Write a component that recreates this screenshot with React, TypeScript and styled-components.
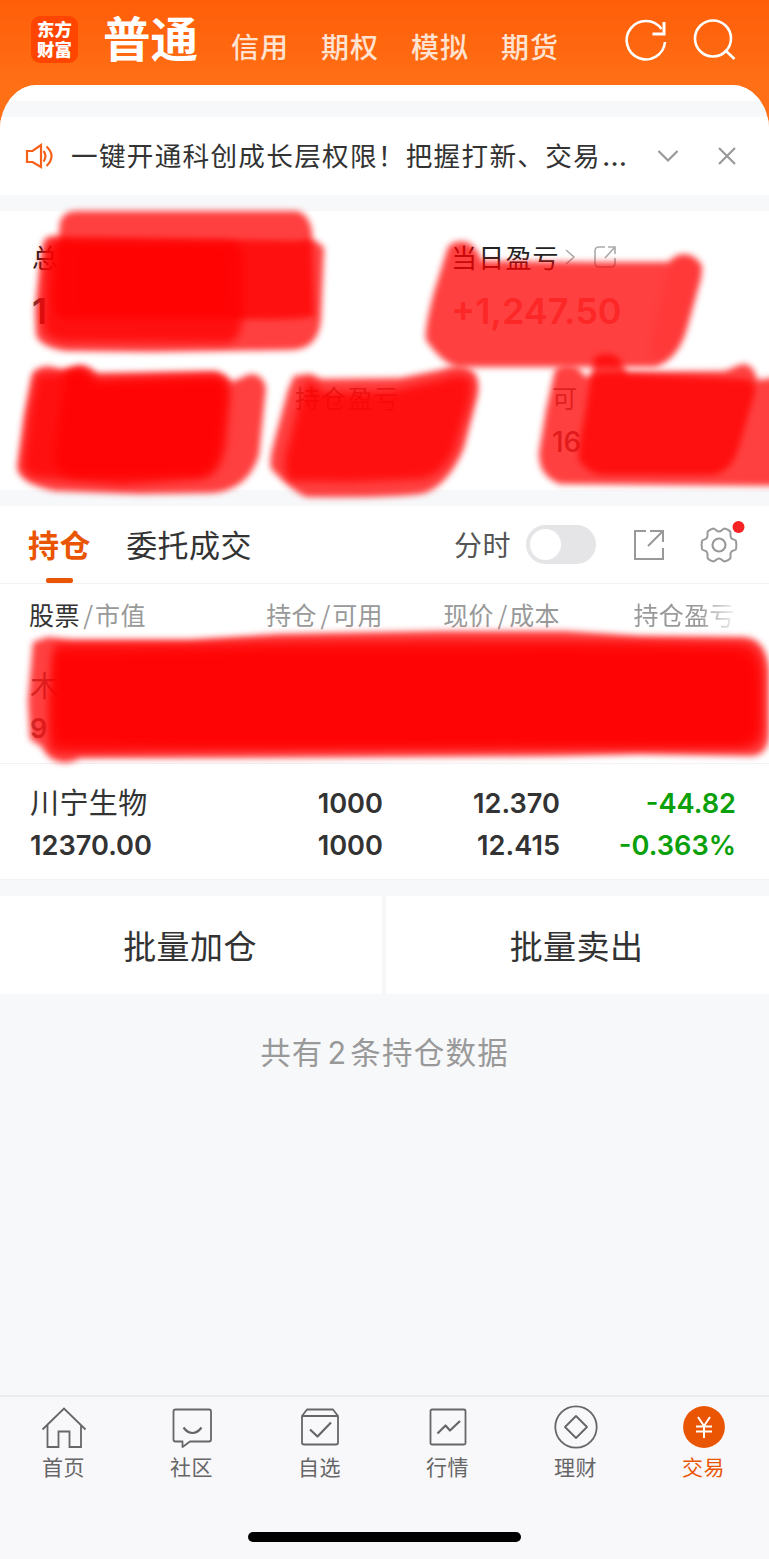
import React from "react";
import styled, { createGlobalStyle } from "styled-components";

const GlobalStyle = createGlobalStyle`
  *, *::before, *::after { box-sizing: border-box; }
  body {
    margin: 0;
    background: #f7f8fa;
    font-family: Inter, "Noto Sans CJK SC", sans-serif;
    color: #333;
  }
`;

const cjk = `"Noto Sans CJK SC", sans-serif`;

const Screen = styled.div`
  position: relative;
  display: flex;
  flex-direction: column;
  width: 769px;
  height: 1559px;
  overflow: hidden;
  background: #f7f8fa;
`;

/* ---------- header ---------- */

const Header = styled.header`
  display: flex;
  align-items: flex-start;
  flex: none;
  height: 130px;
  margin-bottom: -45px;
  padding-left: 31px;
  background: linear-gradient(#ff5e09, #ff6f15 85px);
`;

const Logo = styled.div`
  display: flex;
  flex-direction: column;
  align-items: center;
  flex: none;
  width: 47px;
  height: 47px;
  margin-top: 16px;
  padding-top: 3px;
  border-radius: 9px;
  background: #ff4500;
  color: #fff;
  font: 900 17.4px/20px ${cjk};
`;

const LogoLine = styled.span`
  display: block;
  height: 20px;
`;

const AccountTabs = styled.nav`
  display: flex;
  margin-left: 25px;
`;

const MainAccount = styled.span`
  width: 97px;
  margin-right: 31px;
  color: #fff;
  font: 700 47.5px/73px ${cjk};
`;

const Account = styled.span`
  width: 90px;
  color: #ffe2d0;
  font: 500 28px/93px ${cjk};
  letter-spacing: 1px;
`;

const HeaderIcons = styled.svg`
  flex: none;
  width: 116px;
  height: 50px;
  margin: 16px 0 0 32px;
`;

/* ---------- sheet ---------- */

const Sheet = styled.main`
  position: relative;
  flex: none;
  overflow: hidden;
  border-radius: 37px 37px 0 0 / 44px 44px 0 0;
  background: #f7f8fa;
`;

const Lip = styled.div`
  height: 16px;
  background: #fff;
`;

const Notice = styled.section`
  display: flex;
  align-items: center;
  height: 78px;
  margin-top: 16px;
  padding: 0 31px 0 25px;
  background: #fff;
`;

const NoticeText = styled.p`
  flex: none;
  width: 586px;
  margin: -2px 0 0 17px;
  font: 400 26.6px/40px ${cjk};
  letter-spacing: 1.3px;
  white-space: nowrap;
`;

const Ellipsis = styled.span`
  margin-left: 1px;
  font-family: Inter, sans-serif;
  font-size: 29px;
  letter-spacing: 0;
  line-height: 1;
`;

const Chevron = styled.svg`
  flex: none;
  width: 22px;
  height: 14px;
  margin: 0 38px 0 0;
`;

const Close = styled.svg`
  flex: none;
  width: 20px;
  height: 20px;
`;

/* ---------- assets ---------- */

const Assets = styled.section`
  height: 279px;
  margin-top: 16px;
  padding: 27px 0 0 32px;
  background: #fff;
`;

const AssetRow = styled.div<{ $columns: string }>`
  display: grid;
  grid-template-columns: ${(p) => p.$columns};
  height: 140px;
`;

const AssetLabel = styled.div<{ $small?: boolean }>`
  display: flex;
  align-items: center;
  height: 38px;
  font: 400 ${(p) => (p.$small ? 25 : 26)}px/38px ${cjk};
  letter-spacing: 1.2px;
  color: ${(p) => (p.$small ? "#8a8080" : "#222")};
`;

const AssetValue = styled.div<{ $gain?: boolean; $small?: boolean }>`
  margin-top: ${(p) => (p.$small ? 6 : 15)}px;
  font-size: ${(p) => (p.$small ? 28 : 36)}px;
  font-weight: ${(p) => (p.$small ? 500 : 600)};
  line-height: 40px;
  color: ${(p) => (p.$gain ? "#f5a0a0" : p.$small ? "#857070" : "#444")};
`;

const MiniChevron = styled.svg`
  width: 12px;
  height: 18px;
  margin-left: 4px;
`;

const MiniShare = styled.svg`
  width: 24px;
  height: 24px;
  margin-left: 17px;
`;

/* ---------- positions ---------- */

const Positions = styled.section`
  margin-top: 16px;
  background: #fff;
`;

const Toolbar = styled.div`
  display: flex;
  align-items: center;
  height: 78px;
  padding-left: 29px;
  border-bottom: 1px solid #f2f2f4;
`;

const Tab = styled.div<{ $active?: boolean }>`
  display: flex;
  flex-direction: column;
  align-items: center;
  width: ${(p) => (p.$active ? 61 : 126)}px;
  height: 77px;
  margin-right: ${(p) => (p.$active ? 36 : 202)}px;
  font: ${(p) => (p.$active ? 700 : 400)} 31px/75px ${cjk};
  letter-spacing: 0.4px;
  white-space: nowrap;
  color: ${(p) => (p.$active ? "#ea5504" : "#333")};

  &::after {
    content: "";
    display: ${(p) => (p.$active ? "block" : "none")};
    flex: none;
    width: 27px;
    height: 5px;
    margin-top: -3px;
    border-radius: 2px;
    background: #ea5504;
  }
`;

const ToggleLabel = styled.span`
  width: 72px;
  margin-top: -2px;
  font: 400 28px/40px ${cjk};
  letter-spacing: 0.6px;
  color: #555;
`;

const Toggle = styled.span`
  flex: none;
  width: 70px;
  height: 39px;
  padding: 4px;
  border-radius: 20px;
  background: #e5e5e7;

  &::after {
    content: "";
    display: block;
    width: 31px;
    height: 31px;
    border-radius: 50%;
    background: #fff;
  }
`;

const ToolIcons = styled.svg`
  flex: none;
  width: 120px;
  height: 50px;
  margin-left: 34px;
`;

const columns = "170px 183px 177px 176px";

const HeadRow = styled.div`
  display: grid;
  grid-template-columns: ${columns};
  height: 63px;
  padding-left: 30px;
  font: 400 25px/60px ${cjk};
  letter-spacing: 0.4px;
  color: #999;
`;

const HeadCell = styled.span<{ $fade?: boolean }>`
  justify-self: end;
  margin-right: ${(p) => (p.$fade ? 1 : 0)}px;
  white-space: nowrap;
  mask-image: ${(p) => (p.$fade ? "linear-gradient(90deg, #000 65%, rgba(0, 0, 0, 0.15))" : "none")};

  &:first-child {
    justify-self: start;
    margin-left: -1px;
  }
`;

const Strong = styled.span`
  color: #333;
`;

const Slash = styled.span`
  margin: 0 1.5px 0 3.5px;
`;

const Row = styled.div<{ $height: number }>`
  display: grid;
  grid-template-columns: ${columns};
  grid-template-rows: 42px 42px;
  align-content: start;
  height: ${(p) => p.$height}px;
  padding: 18px 0 0 30px;
  border-bottom: 1px solid #f2f2f4;
`;

const StockName = styled.span<{ $dim?: boolean }>`
  margin-top: -2px;
  font: 400 29px/42px ${cjk};
  letter-spacing: 0.4px;
  color: ${(p) => (p.$dim ? "#777" : "#333")};
`;

const Num = styled.span<{ $loss?: boolean; $left?: boolean; $dim?: boolean }>`
  font-size: 27.2px;
  font-weight: 600;
  line-height: 43px;
  text-align: ${(p) => (p.$left ? "left" : "right")};
  color: ${(p) => (p.$loss ? "#0aa00a" : p.$dim ? "#777" : "#333")};
`;

const Actions = styled.div`
  display: grid;
  grid-template-columns: 382px 383px;
  gap: 4px;
  height: 98px;
  margin-top: 16px;
`;

const Action = styled.button`
  padding: 0 2px 0 0;
  border: 0;
  background: #fff;
  color: #333;
  font: 400 33px/98px ${cjk};
  letter-spacing: 0.4px;
`;

const Summary = styled.p`
  flex: 1;
  margin: 32px 0 0;
  font: 400 30.5px/50px ${cjk};
  letter-spacing: 1.2px;
  text-align: center;
  color: #999;
`;

const SummaryCount = styled.span`
  margin: 0 3px 0 4px;
  font-family: Inter, sans-serif;
`;

/* ---------- bottom bar ---------- */

const BottomBar = styled.nav`
  display: grid;
  grid-template-columns: repeat(6, 128px);
  grid-template-rows: 78px 1fr;
  flex: none;
  height: 164px;
  padding-top: 7px;
  border-top: 2px solid #ebecee;
  background: #f8f8fb;
`;

const BottomItem = styled.div<{ $active?: boolean }>`
  display: flex;
  flex-direction: column;
  align-items: center;
  padding-right: 1px;
  font: 400 21px/32px ${cjk};
  letter-spacing: 0.5px;
  color: ${(p) => (p.$active ? "#ea5504" : "#666")};

  svg {
    width: 46px;
    height: 46px;
    margin-left: 1px;
    fill: none;
    stroke: currentColor;
    stroke-width: 1.8;
    stroke-linejoin: round;
  }
`;

const HomeIndicator = styled.div`
  justify-self: center;
  align-self: start;
  grid-column: 1 / -1;
  width: 273px;
  height: 10px;
  margin-top: 50px;
  border-radius: 5px;
  background: #000;
`;

/* ---------- marker strokes lying over the figures ---------- */

const Marker = styled.svg`
  position: absolute;
  left: 0;
  top: 0;
  width: 769px;
  height: 1559px;
  pointer-events: none;
`;

const strokes: { d: string; o?: number; soft?: boolean }[] = [
  { d: "M60 222Q64 211 76 211H296Q309 213 312 232L314 316Q300 320 240 319H62Q52 315 54 290Z" },
  { d: "M44 240Q50 234 60 237L230 240L300 241Q314 236 324 248L321 320Q318 350 290 350L220 351L150 352L66 351Q40 347 36 335L35 310L40 262Z" },
  { d: "M48 244Q56 238 70 242H232Q243 245 243 258V310Q243 342 226 343L70 342Q44 342 43 325L45 262Z", soft: true },
  { d: "M80 252H222V310H82Z", o: 0.6, soft: true },
  { d: "M32 374Q36 367 48 366L64 370L80 365Q90 366 97 373L214 371Q224 372 232 382L250 374Q263 374 266 388L259 455Q248 490 212 493L140 494L55 491Q20 484 17 468L24 415Z" },
  { d: "M37 375L60 373L80 369L98 379L214 375Q231 378 230 395L226 445Q220 478 200 479L120 485L32 477Q21 469 23 461L30 410Z", soft: true },
  { d: "M66 371L82 369L98 384L214 379Q228 382 225 398L219 445Q214 474 196 475L70 477Q54 470 54 455L60 410Z", soft: true },
  { d: "M294 376L310 374L322 379L400 378L440 370Q462 362 474 372Q480 380 478 394L464 448Q449 484 425 493Q405 498 306 497Q294 492 272 470Q268 464 274 442L288 390Z" },
  { d: "M308 379L324 392L390 391L440 380Q464 370 472 382L470 400L454 450Q442 476 420 479L350 482L290 481Q280 470 289 442L300 400Z", soft: true },
  { d: "M448 247Q454 240 467 242Q477 247 482 261L592 262L668 262L676 256Q692 250 702 266L701 278L687 328Q678 360 655 367H458Q443 364 426 340Q424 330 434 292Z" },
  { d: "M676 258Q692 252 701 268L687 325Q675 358 655 360Q648 354 655 325L668 272Z", o: 0.12, soft: true },
  { d: "M555 370Q560 364 577 367L586 377L600 372L725 371L742 364Q754 364 757 380L780 377V486L660 485L560 484Q538 476 539 452L546 410Z" },
  { d: "M594 358Q602 352 614 355Q623 360 627 374L740 379Q756 378 755 392L738 450Q730 474 710 475H605Q592 476 580 462Q576 456 584 420Z" },
  { d: "M33 642L48 637L72 640H190L280 634L440 631H565L640 636L742 637Q766 637 769 670L769 735Q768 756 750 756L640 754L560 756L240 758L80 758Q70 764 60 762Q48 760 42 747L30 739L28 700Z" },
  { d: "M54 644L72 643H190L280 641L440 640H565L740 643Q762 644 763 675V725Q763 749 744 749H560L250 750L70 753Q48 755 49 742L48 700L52 670Z", soft: true },
  { d: "M54 654L190 652L280 650L565 649L735 651Q755 654 757 677V725Q755 743 735 744L250 747L66 744Q52 742 54 720Z", soft: true },
];

function MarkerLayer() {
  return (
    <Marker viewBox="0 0 769 1559">
      <defs>
        <filter id="edge" x="-10%" y="-10%" width="120%" height="120%">
          <feGaussianBlur stdDeviation="3" />
        </filter>
        <filter id="soft" x="-15%" y="-15%" width="130%" height="130%">
          <feGaussianBlur stdDeviation="4.2" />
        </filter>
      </defs>
      {strokes.map((s, i) => (
        <path
          key={i}
          d={s.d}
          fill="#ff0700"
          fillOpacity={s.o ?? 0.75}
          filter={s.soft ? "url(#soft)" : "url(#edge)"}
        />
      ))}
    </Marker>
  );
}

const bottomItems = [
  {
    label: "首页",
    icon: <path d="M1.500 25.500 23 4.500 44.500 25.500M6.500 21V43H17.500V27.500H28.500V43H40V21" strokeLinejoin="miter" />,
  },
  {
    label: "社区",
    icon: (
      <>
        <path d="M6.500 5.500H40Q42 5.500 42 7.500V35.500Q42 37.500 40 37.500H21L13.500 43V37.500H6.500Q4.500 37.500 4.500 35.500V7.500Q4.500 5.500 6.500 5.500Z" />
        <path d="M14.500 23.500Q18.500 29 23.500 29T32.500 23.500" strokeWidth="2.2" />
      </>
    ),
  },
  {
    label: "自选",
    icon: (
      <>
        <path d="M5 12 10 5.500H36L41 12V38.500Q41 40.500 39 40.500H7Q5 40.500 5 38.500ZM5 12H41" />
        <path d="M13 25.500 20.500 32.500 34 18.500" strokeWidth="2.2" />
      </>
    ),
  },
  {
    label: "行情",
    icon: (
      <>
        <rect x="5.500" y="5.500" width="35" height="35" rx="1.500" />
        <path d="M12.500 29.500 20.500 21.500 25 26.500 35 17" strokeWidth="2.2" />
      </>
    ),
  },
  {
    label: "理财",
    icon: (
      <>
        <circle cx="23" cy="23" r="20.700" />
        <path d="M23 12 34 23 23 34 12 23Z" />
      </>
    ),
  },
  {
    label: "交易",
    active: true,
    icon: (
      <>
        <circle cx="23" cy="23" r="20.900" fill="currentColor" stroke="none" />
        <path d="M17 13 23 22 29 13M15 22.500H31M15 27.500H31M23 22V34" stroke="#fff" strokeWidth="2" />
      </>
    ),
  },
];

export default function App() {
  return (
    <>
      <GlobalStyle />
      <Screen>
        <Header>
          <Logo>
            <LogoLine>东方</LogoLine>
            <LogoLine>财富</LogoLine>
          </Logo>
          <AccountTabs>
            <MainAccount>普通</MainAccount>
            <Account>信用</Account>
            <Account>期权</Account>
            <Account>模拟</Account>
            <Account>期货</Account>
          </AccountTabs>
          <HeaderIcons viewBox="0 0 116 50" fill="none" stroke="#fff" strokeWidth="2.600">
            <path d="M38.500 13A19.200 19.200 0 1 0 42 26" />
            <path d="M41 6V18H29.500" strokeWidth="3" />
            <circle cx="90" cy="22.500" r="18" />
            <path d="M102 34 111.500 43" />
          </HeaderIcons>
        </Header>

        <Sheet>
          <Lip />
          <Notice>
            <svg width="29" height="26" viewBox="0 0 29 26" fill="none" stroke="#f7601a" strokeWidth="2.200">
              <path d="M2 8H7.500L16 2V24L7.500 19H2Z" />
              <path d="M18.500 8Q22.500 13 18.500 18.500M21.500 3.500Q31.500 13 21.500 23" />
            </svg>
            <NoticeText>
              一键开通科创成长层权限！把握打新、交易<Ellipsis>…</Ellipsis>
            </NoticeText>
            <Chevron viewBox="0 0 22 14" fill="none" stroke="#999" strokeWidth="2.200">
              <path d="M1.500 2 11 11.500 20.500 2" />
            </Chevron>
            <Close viewBox="0 0 20 20" fill="none" stroke="#999" strokeWidth="2.200">
              <path d="M2 2 18 18M18 2 2 18" />
            </Close>
          </Notice>

          <Assets>
            <AssetRow $columns="419px 1fr">
              <div>
                <AssetLabel>总</AssetLabel>
                <AssetValue>1</AssetValue>
              </div>
              <div>
                <AssetLabel>
                  当日盈亏
                  <MiniChevron viewBox="0 0 12 18" fill="none" stroke="#aaa" strokeWidth="1.500">
                    <path d="M2 2 10 9 2 16" />
                  </MiniChevron>
                  <MiniShare viewBox="0 0 24 24" fill="none" stroke="#aaa" strokeWidth="1.600">
                    <path d="M12 2H6Q2 2 2 6V18Q2 22 6 22H18Q22 22 22 18V13M12 13 22 2M15 2H22V9" />
                  </MiniShare>
                </AssetLabel>
                <AssetValue $gain>+1,247.50</AssetValue>
              </div>
            </AssetRow>
            <AssetRow $columns="263px 257px 1fr">
              <div />
              <AssetLabel $small>持仓盈亏</AssetLabel>
              <div>
                <AssetLabel $small>可</AssetLabel>
                <AssetValue $small>16</AssetValue>
              </div>
            </AssetRow>
          </Assets>

          <Positions>
            <Toolbar>
              <Tab $active>持仓</Tab>
              <Tab>委托成交</Tab>
              <ToggleLabel>分时</ToggleLabel>
              <Toggle />
              <ToolIcons viewBox="0 0 120 50" fill="none" stroke="#999" strokeWidth="2">
                <path d="M16 11H5V39H33V28M20 11H33V22M18 26 33 11" />
                <circle cx="89" cy="25" r="6.500" strokeWidth="2.200" />
                <path d="M89 11.600C91.500 11.600 92.500 8.600 94.500 8.600Q98 9.300 100.300 11.500C101 13.500 99.500 16.500 101.500 18.500C103.500 20 105.500 19.300 106 21Q106.800 25 106 29C105.500 30.700 103.500 30 101.500 31.500C99.500 33.500 101 36.500 100.300 38.500Q98 40.700 94.500 41.400C92.500 41.400 91.500 38.400 89 38.400C86.500 38.400 85.500 41.400 83.500 41.400Q80 40.700 77.700 38.500C77 36.500 78.500 33.500 76.500 31.500C74.500 30 72.500 30.700 72 29Q71.200 25 72 21C72.500 19.300 74.500 20 76.500 18.500C78.500 16.500 77 13.500 77.700 11.500Q80 9.300 83.500 8.600C85.500 8.600 86.500 11.600 89 11.600Z" />
                <circle cx="108.500" cy="7" r="6" fill="#f52323" stroke="none" />
              </ToolIcons>
            </Toolbar>
            <HeadRow>
              <HeadCell>
                <Strong>股票</Strong>
                <Slash>/</Slash>市值
              </HeadCell>
              <HeadCell>
                持仓<Slash>/</Slash>可用
              </HeadCell>
              <HeadCell>
                现价<Slash>/</Slash>成本
              </HeadCell>
              <HeadCell $fade>持仓盈亏</HeadCell>
            </HeadRow>
            <Row $height={117}>
              <StockName $dim>木</StockName>
              <span />
              <span />
              <span />
              <Num $left $dim>
                9
              </Num>
            </Row>
            <Row $height={116}>
              <StockName>川宁生物</StockName>
              <Num>1000</Num>
              <Num>12.370</Num>
              <Num $loss>-44.82</Num>
              <Num $left>12370.00</Num>
              <Num>1000</Num>
              <Num>12.415</Num>
              <Num $loss>-0.363%</Num>
            </Row>
          </Positions>

          <Actions>
            <Action>批量加仓</Action>
            <Action>批量卖出</Action>
          </Actions>
        </Sheet>

        <Summary>
          共有<SummaryCount>2</SummaryCount>条持仓数据
        </Summary>

        <BottomBar>
          {bottomItems.map((item) => (
            <BottomItem key={item.label} $active={item.active}>
              <svg viewBox="0 0 46 46">{item.icon}</svg>
              {item.label}
            </BottomItem>
          ))}
          <HomeIndicator />
        </BottomBar>

        <MarkerLayer />
      </Screen>
    </>
  );
}
